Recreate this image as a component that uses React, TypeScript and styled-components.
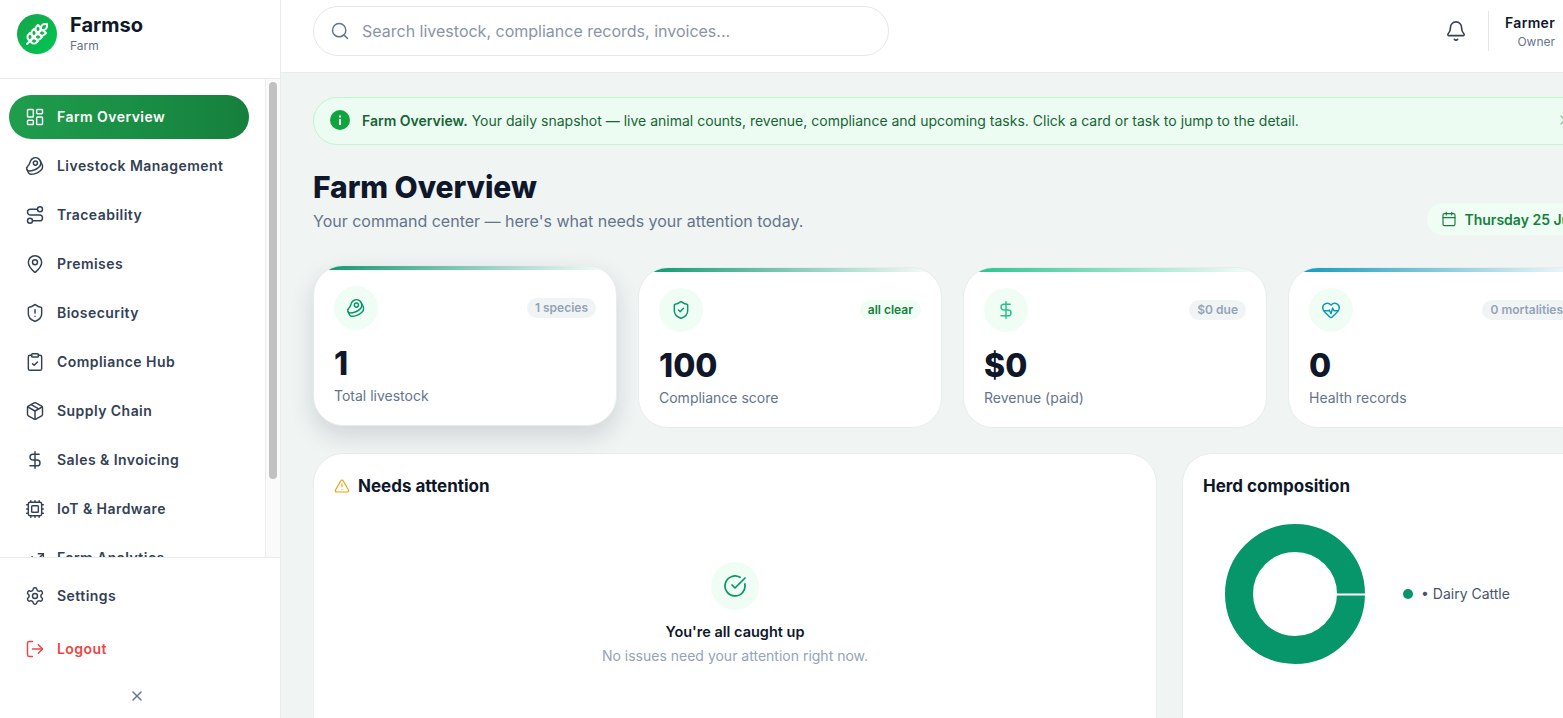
import React from "react";
import styled, { createGlobalStyle } from "styled-components";
import {
  Beef,
  Bell,
  Calendar,
  CircleCheckBig,
  ClipboardCheck,
  Cpu,
  DollarSign,
  HeartPulse,
  LayoutDashboard,
  LogOut,
  MapPin,
  Package,
  Route,
  Search,
  Settings,
  ShieldAlert,
  ShieldCheck,
  TrendingUp,
  TriangleAlert,
  Wheat,
  X,
} from "lucide-react";

const GlobalStyle = createGlobalStyle`
  html, body {
    margin: 0;
    height: 100%;
    overflow: hidden;
    background: #f0f4f3;
    font-family: Inter, "Liberation Sans", sans-serif;
  }
  * { box-sizing: border-box; }
`;

const Shell = styled.div`
  display: flex;
  height: 100vh;
  overflow: hidden;
`;

const Sidebar = styled.aside`
  flex: 0 0 281px;
  display: flex;
  flex-direction: column;
  background: #fff;
  border-right: 1px solid #e8ecec;
`;

const Brand = styled.div`
  flex: 0 0 79px;
  display: flex;
  align-items: flex-start;
  gap: 13px;
  padding: 14px 17px 0;
  border-bottom: 1px solid #e8ecec;
`;

const Logo = styled.div`
  width: 40px;
  height: 40px;
  border-radius: 50%;
  display: flex;
  align-items: center;
  justify-content: center;
  color: #fff;
  background: linear-gradient(135deg, #16a34a, #00c853);
`;

const BrandName = styled.div`
  font-size: 20px;
  line-height: 24px;
  font-weight: 700;
  color: #0f172a;
  margin-top: -1px;
`;

const BrandSub = styled.div`
  font-size: 12px;
  line-height: 16px;
  margin-top: 1px;
  color: #64748b;
`;

const NavWrap = styled.div`
  position: relative;
  flex: 1;
  min-height: 0;
  overflow: hidden;
`;

const Nav = styled.nav`
  height: 100%;
  overflow: hidden;
  padding: 16px 31px 0 9px;
  display: flex;
  flex-direction: column;
  gap: 5px;
`;

const ScrollTrack = styled.div`
  position: absolute;
  top: 0;
  right: 0;
  bottom: 0;
  width: 15px;
  background: #fafafa;
  border-left: 1px solid #ececec;
`;

const ScrollThumb = styled.div`
  position: absolute;
  top: 3px;
  left: 3px;
  width: 8px;
  height: 397px;
  border-radius: 4px;
  background: #c1c1c1;
`;

const NavItem = styled.div<{ $active?: boolean; $danger?: boolean }>`
  flex: 0 0 44px;
  height: 44px;
  display: flex;
  align-items: center;
  gap: 12px;
  padding: 0 0 1px 16px;
  border-radius: 22px;
  font-size: 14px;
  font-weight: 600;
  letter-spacing: 0.45px;
  white-space: nowrap;
  color: ${(p) => (p.$active ? "#fff" : p.$danger ? "#ef4444" : "#334155")};
  background: ${(p) =>
    p.$active ? "linear-gradient(90deg, #1f9d4d, #15803d)" : "transparent"};
`;

const SidebarFooter = styled.div`
  flex: 0 0 161px;
  border-top: 1px solid #e8ecec;
  padding: 16px 16px 0 9px;
  display: flex;
  flex-direction: column;
  gap: 9px;
`;

const Collapse = styled.div`
  display: flex;
  justify-content: center;
  margin-top: 8px;
  color: #64748b;
`;

const Main = styled.main`
  flex: 1;
  min-width: 0;
  overflow: hidden;
  display: flex;
  flex-direction: column;
`;

const Header = styled.header`
  flex: 0 0 73px;
  display: flex;
  align-items: center;
  justify-content: space-between;
  padding: 0 8px 10px 32px;
  background: #fff;
  border-bottom: 1px solid #e8ecec;
`;

const SearchBox = styled.div`
  width: 576px;
  height: 50px;
  display: flex;
  align-items: center;
  gap: 12px;
  padding-left: 16px;
  border: 1px solid #e5e7eb;
  border-radius: 25px;
  font-size: 16px;
  color: #8a94a6;
  svg {
    color: #64748b;
  }
`;

const HeaderRight = styled.div`
  display: flex;
  align-items: center;
`;

const BellButton = styled.div`
  display: flex;
  color: #334155;
  margin-right: 21px;
`;

const User = styled.div`
  height: 40px;
  padding-left: 16px;
  border-left: 1px solid #e5e7eb;
  text-align: right;
`;

const UserName = styled.div`
  font-size: 14px;
  line-height: 20px;
  font-weight: 600;
  letter-spacing: 0.3px;
  color: #0f172a;
  margin-top: 2px;
`;

const UserRole = styled.div`
  font-size: 12px;
  line-height: 16px;
  margin-top: 1px;
  color: #64748b;
`;

const Content = styled.div`
  width: 1355px;
  flex: none;
  padding: 24px 32px 0;
`;

const Banner = styled.div`
  height: 48px;
  display: flex;
  align-items: center;
  gap: 12px;
  padding: 0 14px 2px 16px;
  background: #edfcf3;
  border: 1px solid #bbf7d0;
  border-radius: 24px;
  font-size: 14px;
  color: #166534;
  white-space: nowrap;
  strong {
    font-weight: 600;
  }
`;

const BannerClose = styled.span`
  display: flex;
  margin-left: auto;
  margin-right: 16px;
  color: #86c9a0;
`;

const PageHead = styled.div`
  display: flex;
  justify-content: space-between;
  align-items: flex-end;
  margin-top: 22px;
`;

const Title = styled.h1`
  margin: 0;
  font-size: 30px;
  line-height: 40px;
  font-weight: 800;
  letter-spacing: -0.07px;
  color: #0f172a;
`;

const Subtitle = styled.p`
  margin: 2px 0 0;
  font-size: 16px;
  line-height: 24px;
  color: #64748b;
`;

const DatePill = styled.div`
  height: 32px;
  display: flex;
  align-items: center;
  gap: 7px;
  padding: 0 17px 0 14px;
  margin-bottom: -2px;
  border-radius: 16px;
  background: #f0fdf4;
  color: #15803d;
  font-size: 14px;
  font-weight: 600;
  white-space: nowrap;
`;

const Cards = styled.div`
  display: grid;
  grid-template-columns: repeat(4, 304px);
  gap: 21px;
  margin-top: 34px;
`;

const Card = styled.div<{ $raised?: boolean; $accent: string }>`
  position: relative;
  height: 161px;
  padding: 20px;
  background: #fff;
  border: 1px solid #e8ecec;
  border-radius: 30px;
  overflow: hidden;
  transform: translateY(${(p) => (p.$raised ? "-2px" : "0")});
  box-shadow: ${(p) =>
    p.$raised ? "0 10px 24px rgba(15, 23, 42, 0.14)" : "none"};

  &::before {
    content: "";
    position: absolute;
    top: 0;
    left: 0;
    right: 0;
    height: 4px;
    background: linear-gradient(90deg, ${(p) => p.$accent}, transparent);
  }
`;

const CardTop = styled.div`
  display: flex;
  align-items: center;
  justify-content: space-between;
`;

const IconCircle = styled.div<{ $color: string; $size?: number }>`
  width: ${(p) => p.$size ?? 44}px;
  height: ${(p) => p.$size ?? 44}px;
  display: flex;
  align-items: center;
  justify-content: center;
  border-radius: 50%;
  background: #f0fdf4;
  color: ${(p) => p.$color};
`;

const Badge = styled.span<{ $good?: boolean }>`
  padding: 3px 8px;
  border-radius: 10px;
  font-size: 12px;
  line-height: 14px;
  font-weight: 600;
  white-space: nowrap;
  background: ${(p) => (p.$good ? "#f0fdf4" : "#f1f4f5")};
  color: ${(p) => (p.$good ? "#15803d" : "#94a3b8")};
`;

const CardValue = styled.div`
  margin-top: 14px;
  font-size: 32px;
  line-height: 40px;
  font-weight: 800;
  color: #0f172a;
`;

const CardLabel = styled.div`
  margin-top: 2px;
  font-size: 14px;
  line-height: 20px;
  color: #64748b;
`;

const Panels = styled.div`
  display: grid;
  grid-template-columns: 844px 422px;
  gap: 25px;
  margin-top: 25px;
`;

const Panel = styled.section`
  height: 320px;
  padding: 21px 20px 20px;
  background: #fff;
  border: 1px solid #e8ecec;
  border-radius: 30px;
`;

const PanelTitle = styled.h2`
  display: flex;
  align-items: center;
  gap: 8px;
  margin: 0;
  font-size: 17px;
  line-height: 22px;
  font-weight: 700;
  color: #0f172a;
`;

const Empty = styled.div`
  display: flex;
  flex-direction: column;
  align-items: center;
  margin-top: 65px;
`;

const EmptyTitle = styled.div`
  margin-top: 12px;
  font-size: 14.5px;
  line-height: 20px;
  font-weight: 600;
  color: #0f172a;
`;

const EmptyText = styled.div`
  margin-top: 5px;
  font-size: 14px;
  line-height: 18px;
  color: #94a3b8;
`;

const Herd = styled.div`
  display: flex;
  align-items: center;
  gap: 38px;
  margin-top: 27px;
  padding-left: 22px;
`;

const Legend = styled.div`
  display: flex;
  align-items: center;
  gap: 8px;
  padding-bottom: 1px;
  font-size: 14px;
  color: #475569;
`;

const LegendDot = styled.span`
  width: 10px;
  height: 10px;
  border-radius: 50%;
  background: #069669;
`;

const navItems = [
  { label: "Farm Overview", Icon: LayoutDashboard, active: true },
  { label: "Livestock Management", Icon: Beef },
  { label: "Traceability", Icon: Route },
  { label: "Premises", Icon: MapPin },
  { label: "Biosecurity", Icon: ShieldAlert },
  { label: "Compliance Hub", Icon: ClipboardCheck },
  { label: "Supply Chain", Icon: Package },
  { label: "Sales & Invoicing", Icon: DollarSign },
  { label: "IoT & Hardware", Icon: Cpu },
  { label: "Farm Analytics", Icon: TrendingUp },
];

const stats = [
  { value: "1", label: "Total livestock", badge: "1 species", Icon: Beef, color: "#069669", accent: "#069669", raised: true },
  { value: "100", label: "Compliance score", badge: "all clear", Icon: ShieldCheck, color: "#069669", accent: "#069669", good: true },
  { value: "$0", label: "Revenue (paid)", badge: "$0 due", Icon: DollarSign, color: "#22c28a", accent: "#22c28a" },
  { value: "0", label: "Health records", badge: "0 mortalities", Icon: HeartPulse, color: "#0e96b8", accent: "#0e96b8" },
];

const InfoDot = () => (
  <svg width="20" height="20" viewBox="0 0 20 20" style={{ flex: "none" }}>
    <circle cx="10" cy="10" r="10" fill="#0ea53f" />
    <rect x="9" y="9" width="2" height="6" fill="#fff" />
    <rect x="9" y="5.5" width="2" height="2" fill="#fff" />
  </svg>
);

const Donut = () => (
  <svg width="140" height="140" viewBox="0 0 140 140">
    <circle cx="70" cy="70" r="56" fill="none" stroke="#069669" strokeWidth="28" />
    <rect x="112" y="69.5" width="28" height="2" fill="#fff" />
  </svg>
);

export default function App() {
  return (
    <Shell>
      <GlobalStyle />
      <Sidebar>
        <Brand>
          <Logo>
            <Wheat size={24} strokeWidth={2} />
          </Logo>
          <div>
            <BrandName>Farmso</BrandName>
            <BrandSub>Farm</BrandSub>
          </div>
        </Brand>
        <NavWrap>
          <Nav>
            {navItems.map(({ label, Icon, active }) => (
              <NavItem key={label} $active={active}>
                <Icon size={20} strokeWidth={1.75} />
                {label}
              </NavItem>
            ))}
          </Nav>
          <ScrollTrack>
            <ScrollThumb />
          </ScrollTrack>
        </NavWrap>
        <SidebarFooter>
          <NavItem>
            <Settings size={20} strokeWidth={1.75} />
            Settings
          </NavItem>
          <NavItem $danger>
            <LogOut size={20} strokeWidth={1.75} />
            Logout
          </NavItem>
          <Collapse>
            <X size={16} />
          </Collapse>
        </SidebarFooter>
      </Sidebar>

      <Main>
        <Header>
          <SearchBox>
            <Search size={20} strokeWidth={1.75} />
            Search livestock, compliance records, invoices...
          </SearchBox>
          <HeaderRight>
            <BellButton>
              <Bell size={22} strokeWidth={1.75} />
            </BellButton>
            <User>
              <UserName>Farmer</UserName>
              <UserRole>Owner</UserRole>
            </User>
          </HeaderRight>
        </Header>

        <Content>
          <Banner>
            <InfoDot />
            <span>
              <strong>Farm Overview.</strong> Your daily snapshot — live animal counts, revenue,
              compliance and upcoming tasks. Click a card or task to jump to the detail.
            </span>
            <BannerClose>
              <X size={16} />
            </BannerClose>
          </Banner>

          <PageHead>
            <div>
              <Title>Farm Overview</Title>
              <Subtitle>Your command center — here's what needs your attention today.</Subtitle>
            </div>
            <DatePill>
              <Calendar size={16} strokeWidth={1.75} />
              Thursday 25 June
            </DatePill>
          </PageHead>

          <Cards>
            {stats.map(({ value, label, badge, Icon, color, accent, raised, good }) => (
              <Card key={label} $raised={raised} $accent={accent}>
                <CardTop>
                  <IconCircle $color={color}>
                    <Icon size={20} strokeWidth={1.75} />
                  </IconCircle>
                  <Badge $good={good}>{badge}</Badge>
                </CardTop>
                <CardValue>{value}</CardValue>
                <CardLabel>{label}</CardLabel>
              </Card>
            ))}
          </Cards>

          <Panels>
            <Panel>
              <PanelTitle>
                <TriangleAlert size={16} strokeWidth={1.75} color="#f59e0b" />
                Needs attention
              </PanelTitle>
              <Empty>
                <IconCircle $color="#069669" $size={48}>
                  <CircleCheckBig size={24} strokeWidth={1.75} />
                </IconCircle>
                <EmptyTitle>You're all caught up</EmptyTitle>
                <EmptyText>No issues need your attention right now.</EmptyText>
              </Empty>
            </Panel>
            <Panel>
              <PanelTitle>Herd composition</PanelTitle>
              <Herd>
                <Donut />
                <Legend>
                  <LegendDot />
                  <span>• Dairy Cattle</span>
                </Legend>
              </Herd>
            </Panel>
          </Panels>
        </Content>
      </Main>
    </Shell>
  );
}
